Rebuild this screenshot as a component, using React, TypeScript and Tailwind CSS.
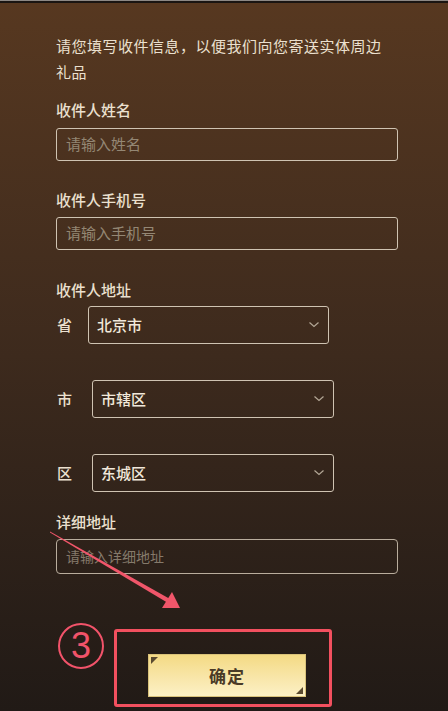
import React from "react";

const font = { fontFamily: '"Noto Sans CJK SC", "Noto Sans", sans-serif' };

function Chevron() {
  return (
    <svg width="12" height="8" viewBox="0 0 12 8" className="shrink-0">
      <path d="M1.5 1.5 L6 5.5 L10.5 1.5" fill="none" stroke="#b3a796" strokeWidth="1.2" />
    </svg>
  );
}

function Select({ value, w, ml }: { value: string; w: string; ml: string }) {
  return (
    <div
      className={`flex h-[38px] items-center justify-between rounded-[3px] border-[1.5px] border-[#cfc3b2] pl-[8px] pr-[8px] ${w} ${ml}`}
    >
      <span className="text-[15px] font-medium text-[#f1e8da]">{value}</span>
      <Chevron />
    </div>
  );
}

export default function App() {
  return (
    <div
      className="relative h-[711px] w-[448px] overflow-hidden bg-gradient-to-b from-[#573820] via-[#3d2a1d] to-[#211a16]"
      style={font}
    >
      <div className="h-[3px] w-full border-t border-[#8d8884] bg-[#1a1512]" />
      <div className="flex flex-col pl-[56px] pr-[50px] pt-[30px] text-[#ebe0cf]">
        <p className="text-[15px] leading-[26px] tracking-[0.5px]">
          请您填写收件信息，以便我们向您寄送实体周边<span className="whitespace-nowrap">礼品</span>
        </p>
        <div className="mt-[14px] text-[15px] font-medium leading-[22px]">收件人姓名</div>
        <div className="mt-[7px] flex h-[33px] items-center rounded-[3px] border-[1.5px] border-[#cfc3b2] pl-[9px] text-[15px] text-[#948774]">
          请输入姓名
        </div>
        <div className="mt-[28px] text-[15px] font-medium leading-[22px]">收件人手机号</div>
        <div className="mt-[6px] flex h-[33px] items-center rounded-[3px] border-[1.5px] border-[#cfc3b2] pl-[9px] text-[15px] text-[#948774]">
          请输入手机号
        </div>
        <div className="mt-[29px] text-[15px] font-medium leading-[22px]">收件人地址</div>
        <div className="mt-[5px] flex items-center">
          <span className="pl-[1px] text-[15px] font-medium">省</span>
          <Select value="北京市" w="w-[241px]" ml="ml-[16px]" />
        </div>
        <div className="mt-[36px] flex items-center">
          <span className="pl-[1px] text-[15px] font-medium">市</span>
          <Select value="市辖区" w="w-[242px]" ml="ml-[20px]" />
        </div>
        <div className="mt-[36px] flex items-center">
          <span className="pl-[1px] text-[15px] font-medium">区</span>
          <Select value="东城区" w="w-[242px]" ml="ml-[20px]" />
        </div>
        <div className="mt-[19px] text-[15px] font-medium leading-[22px]">详细地址</div>
        <div className="mt-[6px] flex h-[35px] items-center rounded-[4px] border-[1.5px] border-[#b9ad9d] pl-[9px] text-[14px] text-[#857a6b]">
          请输入详细地址
        </div>
        <div className="mt-[55px] flex items-start">
          <div
            className="ml-[2px] mt-[-6px] flex h-[46px] w-[46px] items-center justify-center rounded-full border-[2.5px] border-[#f2536a] text-[36px] leading-none text-[#f2536a]"
            style={{ fontFamily: '"Liberation Sans", sans-serif' }}
          >
            3
          </div>
          <div className="ml-[10px] h-[78px] w-[218px] rounded-[3px] border-[3px] border-[#f2505f] pl-[31px] pt-[22px]">
            <div className="relative flex h-[43px] w-[158px] items-center justify-center border border-[#d9c27a] bg-gradient-to-b from-[#f4da84] to-[#fcf0c5]">
              <div className="absolute left-[2px] top-[2px] h-0 w-0 border-r-[7px] border-t-[7px] border-r-transparent border-t-[#5a4a30]" />
              <div className="absolute bottom-[2px] right-[2px] h-0 w-0 border-b-[7px] border-l-[7px] border-b-[#5a4a30] border-l-transparent" />
              <span className="text-[17px] font-bold tracking-[1px] text-[#4a3a26]">确定</span>
            </div>
          </div>
        </div>
      </div>
      <svg className="pointer-events-none absolute left-0 top-0" width="448" height="711" viewBox="0 0 448 711">
        <polygon points="50,531.5 170,599 168,603 50,532.5" fill="#f0566a" />
        <polygon points="180,608 162,608 172,592" fill="#f0566a" />
      </svg>
    </div>
  );
}
